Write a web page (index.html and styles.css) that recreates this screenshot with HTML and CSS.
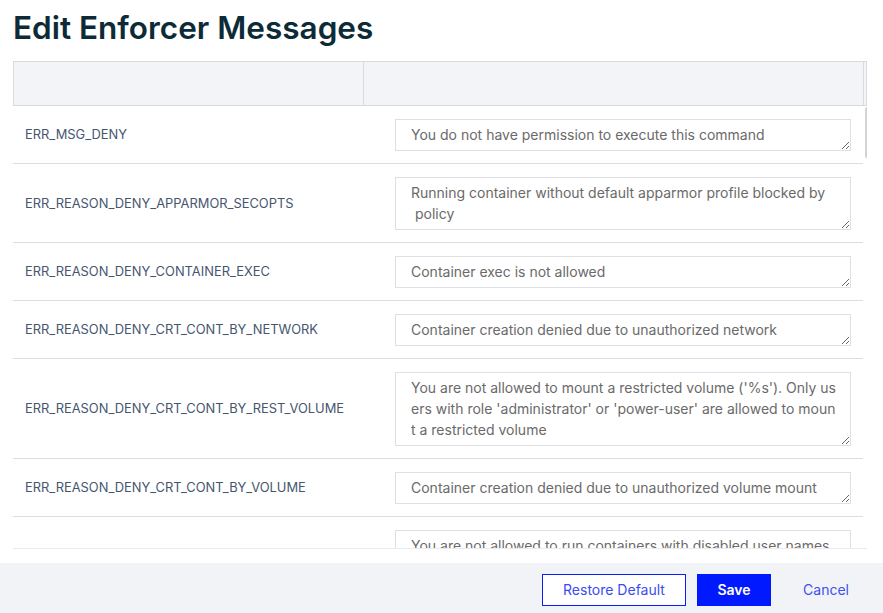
FILE: index.html
```html
<!DOCTYPE html>
<html lang="en">
<head>
<meta charset="utf-8">
<title>Edit Enforcer Messages</title>
<link rel="stylesheet" href="styles.css">
</head>
<body>
<div class="page">
  <h1 class="title">Edit Enforcer Messages</h1>
  <div class="table">
    <div class="thead">
      <div class="th th-name"></div>
      <div class="th th-msg"></div>
      <div class="th th-gutter"></div>
    </div>
    <div class="tbody">
      <div class="row">
        <div class="name">ERR_MSG_DENY</div>
        <div class="msg"><textarea class="ta l1" readonly>You do not have permission to execute this command</textarea></div>
      </div>
      <div class="row">
        <div class="name">ERR_REASON_DENY_APPARMOR_SECOPTS</div>
        <div class="msg"><textarea class="ta l2" readonly>Running container without default apparmor profile blocked by
 policy</textarea></div>
      </div>
      <div class="row">
        <div class="name">ERR_REASON_DENY_CONTAINER_EXEC</div>
        <div class="msg"><textarea class="ta l1" readonly>Container exec is not allowed</textarea></div>
      </div>
      <div class="row">
        <div class="name">ERR_REASON_DENY_CRT_CONT_BY_NETWORK</div>
        <div class="msg"><textarea class="ta l1" readonly>Container creation denied due to unauthorized network</textarea></div>
      </div>
      <div class="row">
        <div class="name">ERR_REASON_DENY_CRT_CONT_BY_REST_VOLUME</div>
        <div class="msg"><textarea class="ta l3" readonly>You are not allowed to mount a restricted volume ('%s'). Only us
ers with role 'administrator' or 'power-user' are allowed to moun
t a restricted volume</textarea></div>
      </div>
      <div class="row">
        <div class="name">ERR_REASON_DENY_CRT_CONT_BY_VOLUME</div>
        <div class="msg"><textarea class="ta l1" readonly>Container creation denied due to unauthorized volume mount</textarea></div>
      </div>
      <div class="row">
        <div class="name">ERR_REASON_DENY_USERNS_DISABLED</div>
        <div class="msg"><textarea class="ta l2" readonly>You are not allowed to run containers with disabled user names
paces</textarea></div>
      </div>
      <div class="thumb"></div>
    </div>
  </div>
</div>
<div class="footer">
  <button class="btn btn-outline" type="button">Restore Default</button>
  <button class="btn btn-primary" type="button">Save</button>
  <button class="btn btn-link" type="button">Cancel</button>
</div>
</body>
</html>
```

FILE: styles.css
```css
html, body {
  margin: 0;
  padding: 0;
  height: 613px;
  overflow: hidden;
  background: #ffffff;
  font-family: Inter, "Noto Sans", "Liberation Sans", sans-serif;
}

.page {
  padding: 0 13px;
  height: 563px;
}

.title {
  margin: 0;
  padding: 10px 0 16px;
  font-size: 31.5px;
  line-height: 35px;
  font-weight: 600;
  color: #0d2b37;
  letter-spacing: 0;
}

.table {
  width: 854px;
}

.thead {
  display: grid;
  grid-template-columns: 350px 500px 1fr;
  height: 43px;
  border: 1px solid #dadadd;
  background: #f3f4f8;
}

.th {
  border-right: 1px solid #dadadd;
}

.th-gutter {
  border-right: none;
}

.tbody {
  position: relative;
  height: 442px;
  overflow: hidden;
  border-bottom: 1px solid #ebebef;
}

.row {
  display: grid;
  grid-template-columns: 350px 500px;
  align-items: center;
  border-bottom: 1px solid #dedee2;
  width: 850px;
}

.name {
  padding-left: 12px;
  font-size: 12.9px;
  color: #46566f;
  letter-spacing: 0;
}

.msg {
  padding: 13px 12px 12px 32px;
  display: flex;
}

.ta {
  display: block;
  box-sizing: border-box;
  width: 456px;
  margin: 0;
  padding: 4px 14px 5px 15px;
  border: 1px solid #dcdfe5;
  border-radius: 0;
  font-family: Inter, "Noto Sans", "Liberation Sans", sans-serif;
  font-size: 14px;
  line-height: 21px;
  color: #6a6a6a;
  white-space: pre;
  overflow: hidden;
  outline: none;
  background: #ffffff;
}

.l1 { height: 32px; }
.l2 { height: 53px; }
.l3 { height: 74px; }

.thumb {
  position: absolute;
  top: 1px;
  right: -2px;
  width: 4px;
  height: 51px;
  border-radius: 2px;
  background: #d3d3d6;
}

.footer {
  display: flex;
  justify-content: flex-end;
  align-items: flex-start;
  gap: 11px;
  height: 50px;
  box-sizing: border-box;
  padding: 11px 13px 0 0;
  background: #f2f3f7;
}

.btn {
  height: 32px;
  padding: 0 20px;
  border: 1px solid transparent;
  border-radius: 0;
  font-family: Inter, "Noto Sans", "Liberation Sans", sans-serif;
  font-size: 14px;
  line-height: 30px;
  cursor: pointer;
  background: transparent;
}

.btn-outline {
  background: #ffffff;
  border-color: #0a1ff5;
  color: #3a4cf2;
  padding: 0 20px;
}

.btn-primary {
  background: #0019ff;
  border-color: #0019ff;
  color: #ffffff;
  font-weight: 600;
  padding: 0 19.5px;
}

.btn-link {
  color: #3f50ee;
  padding: 0 20px;
}
```
